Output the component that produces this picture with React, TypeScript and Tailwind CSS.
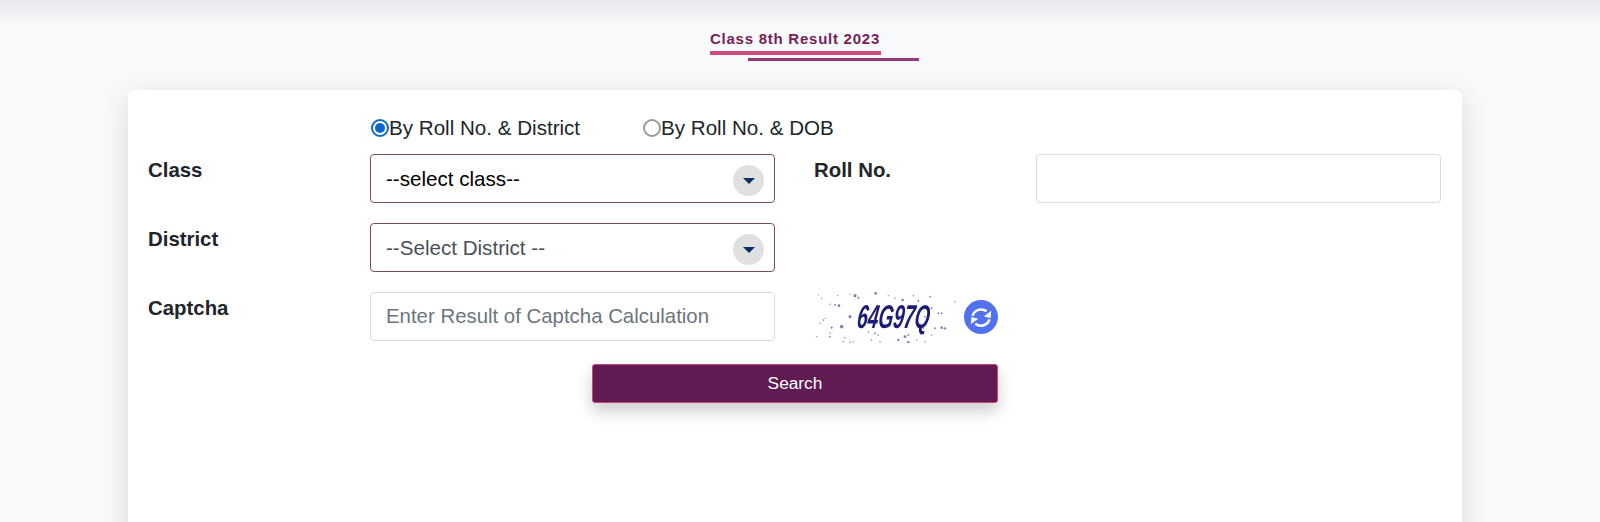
import React from "react";

const font = { fontFamily: '"Liberation Sans", Arial, sans-serif' };

const dots: [number, number, number][] = [
  [25,30,1],[35,40,1],[83,32,1],[135,32,2.6],[145,38,1.6],[197,25,2.4],[60,58,1.2],[75,60,1.6],[87,62,2.2],[120,95,2.6],[40,105,1.4],[30,115,1.2],[65,128,1.8],[95,125,3],[60,145,1.2],[20,155,1],[60,155,1.4],[105,158,1.2],[100,170,1.2],[120,172,1.2],[130,170,1.2],[195,145,1.6],[235,32,1],[255,40,1.2],[278,45,2.2],[310,32,1.2],[325,48,1.6],[360,35,1.4],[365,70,1.6],[385,85,1.6],[395,85,1.6],[345,95,1.6],[395,128,2.2],[405,130,2],[375,130,1.6],[340,130,1.2],[295,150,1.6],[265,165,2],[285,155,2.4],[295,172,2.2],[365,150,1.2],[345,170,1.2],[435,50,1.2],[205,150,1.4],[175,140,1.2],[210,170,1.2],[185,165,1.2],[320,165,1.2],[45,100,1],[120,28,1],
];

function Arrow() {
  return (
    <span className="absolute right-[10px] top-[10px] flex h-[31px] w-[31px] items-center justify-center rounded-full bg-[#e0e0e0]">
      <svg width="12" height="6" viewBox="0 0 12 6"><path d="M0 0h12L6 6z" fill="#0b2f5e" /></svg>
    </span>
  );
}

function SelectBox({ text, color }: { text: string; color: string }) {
  return (
    <div className="relative flex h-[49px] w-[405px] items-center rounded-[4px] border border-[#7a4a68] bg-white pt-[1px] pl-[15px] text-[20.6px]" style={{ color }}>
      {text}
      <Arrow />
    </div>
  );
}

function Radio({ checked }: { checked?: boolean }) {
  return checked ? (
    <span className="flex h-[18px] w-[18px] items-center justify-center rounded-full border-2 border-[#0b68cc] bg-white">
      <span className="h-[10px] w-[10px] rounded-full bg-[#0b68cc]" />
    </span>
  ) : (
    <span className="h-[18px] w-[18px] rounded-full border-2 border-[#9a9a9a] bg-white" />
  );
}

function Label({ children }: { children: React.ReactNode }) {
  return <div className="w-[222px] pt-[1px] text-[20.4px] leading-[30px] font-bold text-[#212529]">{children}</div>;
}

function Captcha() {
  return (
    <svg width="142" height="53" viewBox="0 0 142 53" className="block shrink-0 blur-[0.35px]">
      <g transform="translate(-5 -5) scale(0.3333)">
        {dots.map(([x, y, r], i) => (
          <circle key={i} cx={x} cy={y} r={r * 1.8} fill="#2a2f7c" opacity={0.6} />
        ))}
      </g>
      <text
        transform="translate(41 38) skewX(-8) scale(0.58 1)"
        fontFamily='"Liberation Sans", Arial, sans-serif'
        fontSize="33"
        fontStyle="italic"
        fontWeight="700"
        fill="#1a1a78"
      >
        64G97Q
      </text>
    </svg>
  );
}

export default function App() {
  return (
    <div className="relative h-[522px] overflow-hidden bg-[#f8f9fb]" style={font}>
      <div className="h-[24px] bg-gradient-to-b from-[#e8e9ed] to-[#f8f9fb]" />
      <div className="flex justify-center pt-[6px]">
        <div className="ml-[29px] w-[209px]">
          <div className="text-[15px] leading-[18px] font-bold tracking-[0.75px] text-[#7a1f55]">Class 8th Result 2023</div>
          <div className="mt-[3px] h-[4px] w-[171px] bg-[#cf4a7c]" />
          <div className="mt-[3px] ml-[38px] h-[3px] w-[171px] bg-[#96397a]" />
        </div>
      </div>
      <div className="mt-[29px] ml-[128px] h-[500px] w-[1334px] rounded-[6px] bg-white pt-[26px] pl-[20px] shadow-[0_8px_28px_rgba(0,0,0,0.13)]">
        <div className="flex h-[38px] items-start pl-[223px] text-[20.6px] leading-[24px] text-[#212529]">
          <label className="flex w-[272px] items-center"><Radio checked />By Roll No. &amp; District</label>
          <label className="flex items-center"><Radio />By Roll No. &amp; DOB</label>
        </div>
        <div className="flex">
          <Label>Class</Label>
          <SelectBox text="--select class--" color="#000" />
          <div className="w-[39px]" />
          <Label>Roll No.</Label>
          <div className="h-[49px] w-[405px] rounded-[4px] border border-[#d8dbe0] bg-white" />
        </div>
        <div className="mt-[20px] flex">
          <Label>District</Label>
          <SelectBox text="--Select District --" color="#495057" />
        </div>
        <div className="mt-[20px] flex">
          <Label>Captcha</Label>
          <div className="flex h-[49px] w-[405px] items-center rounded-[4px] border border-[#d8dbe0] bg-white pl-[15px] text-[20.4px] text-[#6c757d]">
            Enter Result of Captcha Calculation
          </div>
          <div className="ml-[40px] flex h-[49px] items-center">
            <Captcha />
            <span className="ml-[7px] flex h-[34px] w-[34px] items-center justify-center rounded-full bg-[#5271f0]">
              <svg width="34" height="34" viewBox="0 0 30 30" fill="none">
                <path d="M7.5 14A8 8 0 0 1 20 10" stroke="white" strokeWidth="2.2" />
                <path d="M22.5 17A8 8 0 0 1 10 21" stroke="white" strokeWidth="2.2" />
                <path d="M24 9.5L23.5 16L17.5 14.5z" fill="white" />
                <path d="M6 21.5L6.5 15L12.5 16.5z" fill="white" />
              </svg>
            </span>
          </div>
        </div>
        <div className="mt-[23px] ml-[444px] flex h-[39px] w-[406px] items-center justify-center rounded-[3px] border border-[#c8486e] bg-[#5f1b52] text-[17.3px] text-white shadow-[0_8px_16px_rgba(0,0,0,0.2)]">
          Search
        </div>
      </div>
    </div>
  );
}
